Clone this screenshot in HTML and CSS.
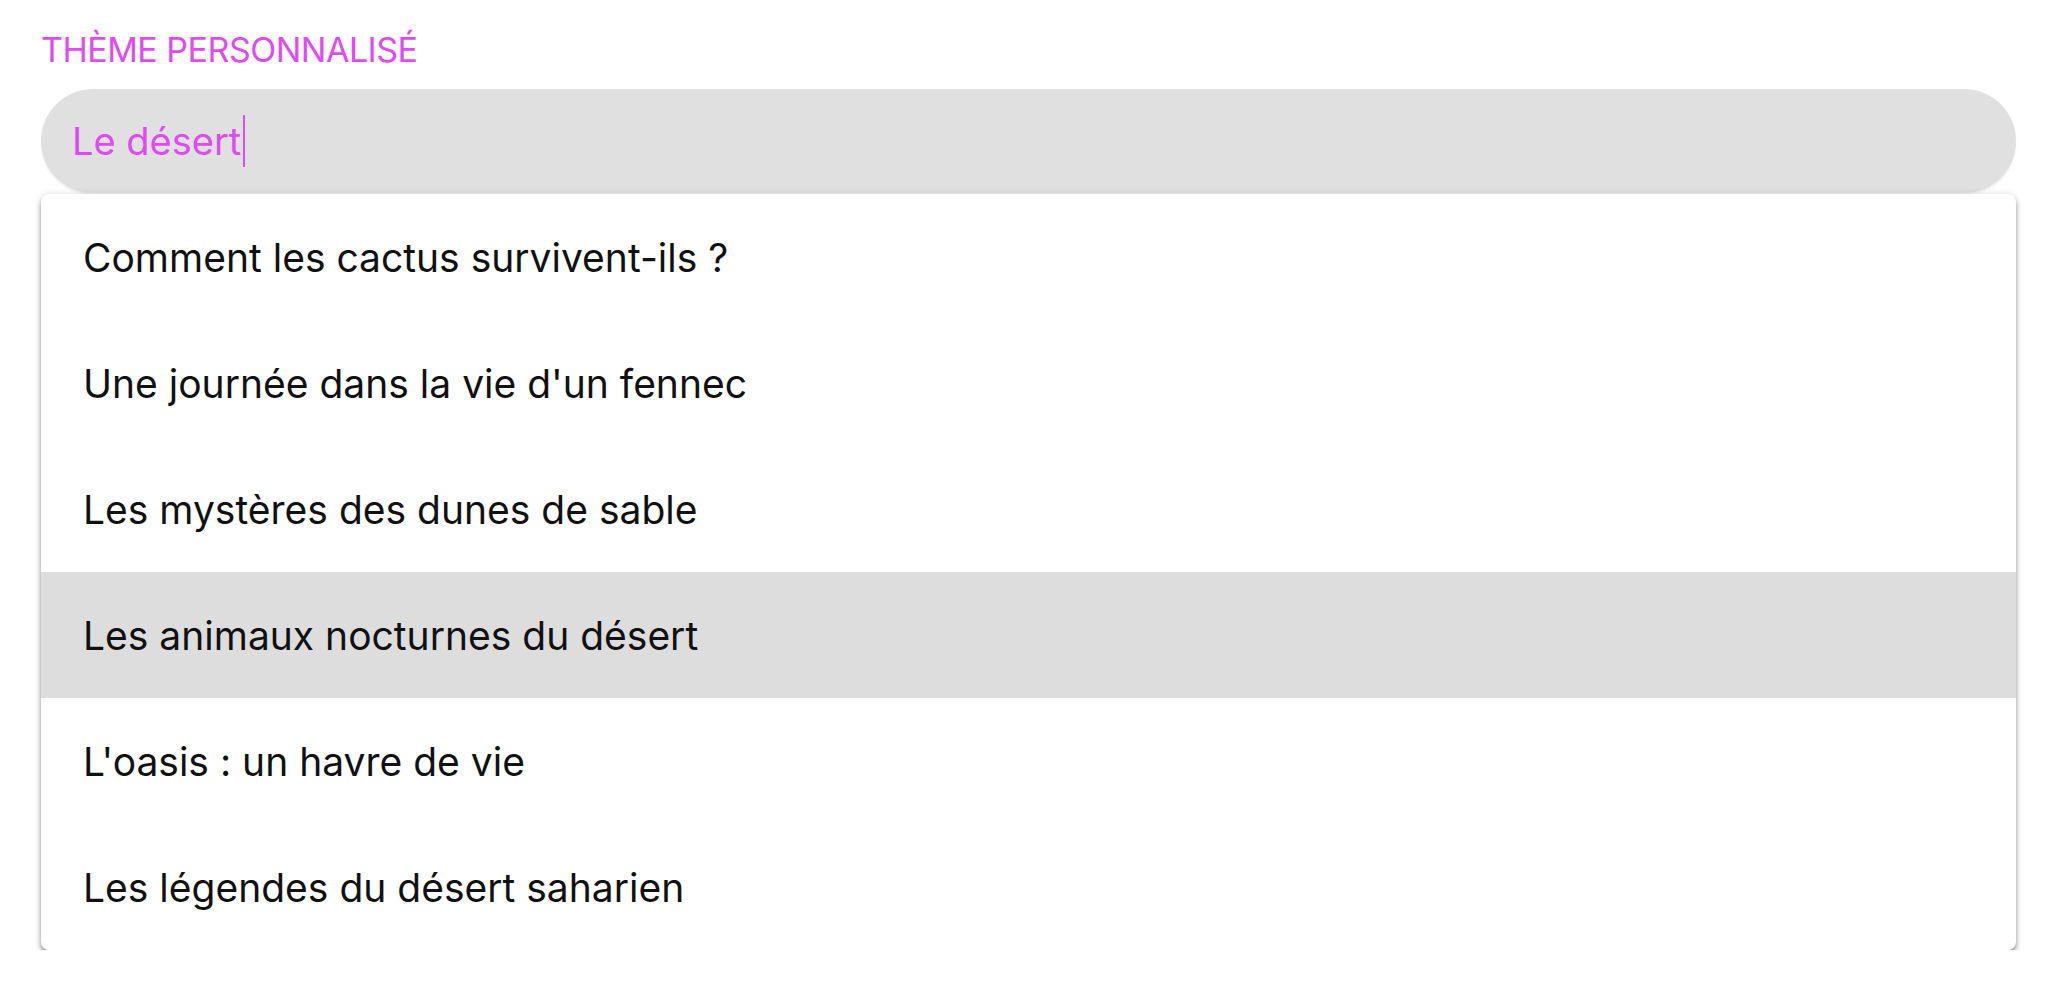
FILE: index.html
```html
<!DOCTYPE html>
<html lang="fr">
<head>
  <meta charset="UTF-8" />
  <meta name="viewport" content="width=device-width, initial-scale=1.0" />
  <title>Thème personnalisé</title>
  <link rel="stylesheet" href="styles.css">
</head>
<body>
  <div class="field">
    <label class="field-label" for="theme">Thème personnalisé</label>

    <!-- champ de saisie -->
    <div class="input-box" id="theme">
      <span class="input-text">Le désert</span><span class="caret"></span>
    </div>

    <!-- suggestions -->
    <ul class="menu">
      <li>Comment les cactus survivent-ils ?</li>
      <li>Une journée dans la vie d'un fennec</li>
      <li>Les mystères des dunes de sable</li>
      <li class="active">Les animaux nocturnes du désert</li>
      <li>L'oasis : un havre de vie</li>
      <li>Les légendes du désert saharien</li>
    </ul>
  </div>
</body>
</html>
```

FILE: styles.css
```css
body { margin: 0; background: #fff; font-family: Inter, "Noto Sans", sans-serif; color: #111; }
.field { padding: 30px 43px 0 41px; }
.field-label { display: block; height: 40px; line-height: 40px; margin-bottom: 19px; font-size: 34px; text-transform: uppercase; color: #de4bf2; letter-spacing: -0.5px; }
.input-box { display: flex; align-items: center; height: 104px; padding-left: 31px; background: #e0e0e0; border-radius: 52px; box-shadow: 0 2px 2px rgba(0,0,0,0.07); }
.input-text { font-size: 38px; color: #de4bf2; }
.caret { display: inline-block; width: 2px; height: 52px; margin-left: 2px; background: #de4bf2; }
.menu { list-style: none; margin: 1px 0 0; padding: 0; background: #fff; border-radius: 8px; overflow: hidden; box-shadow: 0 4px 5px rgba(0,0,0,0.4), 0 0 9px rgba(0,0,0,0.1); }
.menu li { display: flex; align-items: center; height: 126px; padding-left: 42px; font-size: 39px; }
.menu li.active { background: #dddddd; }
```
